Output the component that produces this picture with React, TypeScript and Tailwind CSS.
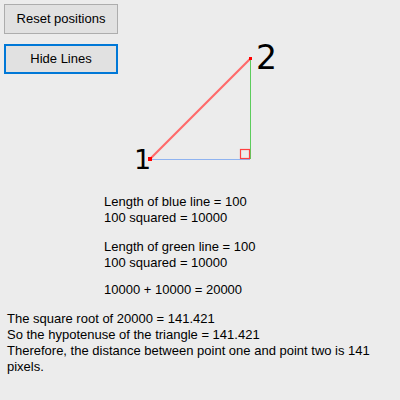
import React from 'react';

const font = { fontFamily: '"Liberation Sans", Arial, sans-serif' };

const TriangleCanvas: React.FC = () => (
  <svg className="absolute left-0 top-0" width={400} height={400} viewBox="0 0 400 400">
    <line x1={150} y1={159.5} x2={250} y2={159.5} stroke="#8fb3f0" strokeWidth={1} />
    <line x1={250.5} y1={59} x2={250.5} y2={159} stroke="#5ccc5c" strokeWidth={1} />
    <rect x={240.5} y={149.5} width={9} height={9} fill="none" stroke="#ff4040" strokeWidth={1.2} />
    <line x1={150} y1={159} x2={250} y2={59} stroke="#ff6a6a" strokeWidth={2.2} />
    <rect x={148} y={157} width={4} height={4} fill="#ff0000" />
    <rect x={249} y={57} width={3} height={3} fill="#ff0000" />
    <text x={134} y={169} fontSize={27} fill="#000" style={{ fontFamily: '"DejaVu Sans", sans-serif' }}>1</text>
    <text x={256} y={69} fontSize={33} fill="#000" style={{ fontFamily: '"DejaVu Sans", sans-serif' }}>2</text>
  </svg>
);

export default function App() {
  return (
    <div className="relative w-[400px] h-[400px] bg-[#ececec] text-[13px] leading-4 text-black overflow-hidden" style={font}>
      <TriangleCanvas />
      <div className="relative flex flex-col gap-[10px] pl-1 pt-1">
        <button className="w-[114px] h-[30px] bg-[#e1e1e1] border border-[#adadad] text-[13px]">Reset positions</button>
        <button className="w-[114px] h-[30px] bg-[#e1e1e1] border-2 border-[#0078d7] text-[13px]">Hide Lines</button>
      </div>
      <div className="relative ml-[104px] mt-[120px]">
        <p>Length of blue line = 100</p>
        <p>100 squared = 10000</p>
      </div>
      <div className="relative ml-[104px] mt-[13px]">
        <p>Length of green line = 100</p>
        <p>100 squared = 10000</p>
      </div>
      <div className="relative ml-[104px] mt-[11px]">
        <p>10000 + 10000 = 20000</p>
      </div>
      <div className="relative ml-[7px] mt-[13px] w-[385px]">
        <p>The square root of 20000 = 141.421</p>
        <p>So the hypotenuse of the triangle = 141.421</p>
        <p>Therefore, the distance between point one and point two is 141 pixels.</p>
      </div>
    </div>
  );
}
